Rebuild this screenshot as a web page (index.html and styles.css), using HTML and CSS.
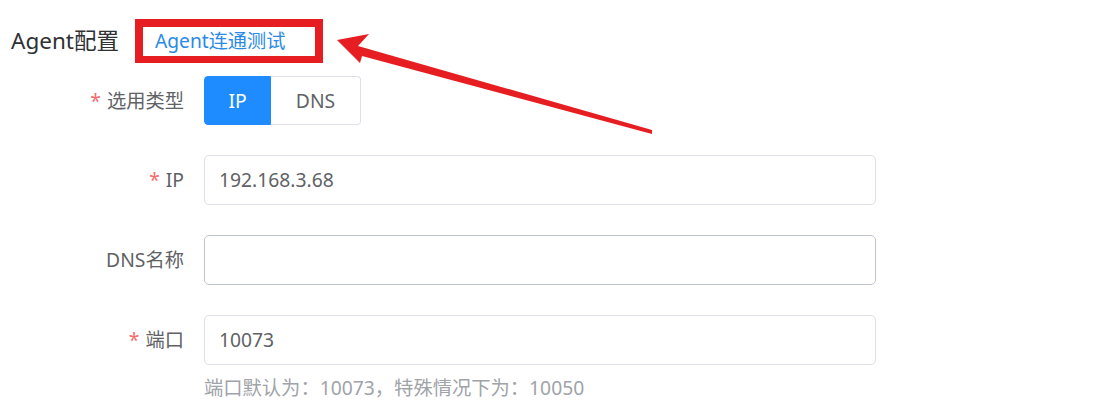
FILE: index.html
```html
<!DOCTYPE html>
<html lang="zh-CN">
<head>
<meta charset="utf-8">
<title>Agent配置</title>
<link rel="stylesheet" href="styles.css">
</head>
<body>
<div class="page">
  <div class="header">
    <h2 class="title">Agent配置</h2>
    <a class="test-link">Agent连通测试</a>
  </div>
  <form class="form">
    <div class="row">
      <label class="label"><span class="req">*</span>选用类型</label>
      <div class="control">
        <div class="seg">
          <span class="seg-btn active">IP</span>
          <span class="seg-btn">DNS</span>
        </div>
      </div>
    </div>
    <div class="row">
      <label class="label"><span class="req">*</span>IP</label>
      <div class="control"><div class="input">192.168.3.68</div></div>
    </div>
    <div class="row">
      <label class="label">DNS名称</label>
      <div class="control"><div class="input hover"></div></div>
    </div>
    <div class="row last">
      <label class="label"><span class="req">*</span>端口</label>
      <div class="control">
        <div class="input">10073</div>
        <div class="hint">端口默认为：10073，特殊情况下为：10050</div>
      </div>
    </div>
  </form>
  <svg class="arrow" width="1106" height="407" viewBox="0 0 1106 407">
    <polygon points="337,40 369,34 358,46 652,130 652,134 362,56 360,63" fill="#e61e22"/>
  </svg>
</div>
</body>
</html>
```
FILE: styles.css
```css
* { box-sizing: border-box; }
html, body { margin: 0; padding: 0; background: #fff; }
body {
  font-family: "Noto Sans", "Noto Sans CJK SC", sans-serif;
  color: #606266;
  width: 1106px;
  height: 407px;
  overflow: hidden;
}
.page { position: relative; width: 1106px; height: 407px; }
.header {
  display: flex;
  align-items: center;
  padding: 19px 0 0 11px;
  height: 63px;
}
.title {
  margin: 0;
  font-size: 22.5px;
  font-weight: 400;
  color: #303133;
  line-height: 44px;
  width: 124px;
}
.test-link {
  display: block;
  width: 188px;
  height: 44px;
  border: 8px solid #e61e22;
  border-bottom-width: 7px;
  padding-left: 12px;
  color: #2a8ae6;
  font-size: 19.2px;
  line-height: 28px;
}
.form { padding-top: 13px; }
.row {
  display: flex;
  align-items: flex-start;
  margin-bottom: 30px;
}
.row:first-child { margin-bottom: 30px; }
.row.last { margin-bottom: 0; }
.label {
  width: 184px;
  flex: none;
  text-align: right;
  font-size: 19.3px;
  line-height: 50px;
  color: #606266;
}
.row:first-child .label { line-height: 49px; }
.req { color: #f56c6c; margin-right: 6px; }
.control { margin-left: 20px; width: 672px; }
.seg { display: flex; height: 49px; }
.seg-btn {
  display: flex;
  align-items: center;
  justify-content: center;
  font-size: 19.3px;
  border: 1px solid #dcdfe6;
  color: #606266;
  background: #fff;
}
.seg-btn.active {
  width: 67px;
  background: #1e8cff;
  border-color: #1e8cff;
  color: #fff;
  border-radius: 4px 0 0 4px;
}
.seg-btn:last-child {
  width: 90px;
  border-left: 0;
  border-radius: 0 4px 4px 0;
}
.input {
  height: 50px;
  border: 1px solid #dcdfe6;
  border-radius: 5px;
  padding-left: 14px;
  font-size: 19.3px;
  line-height: 48px;
  color: #606266;
}
.input.hover { border-color: #c0c4cc; }
.hint {
  margin-top: 11px;
  font-size: 19.3px;
  line-height: 24px;
  color: #a0a3a8;
}
.arrow { position: absolute; left: 0; top: 0; pointer-events: none; }
```
